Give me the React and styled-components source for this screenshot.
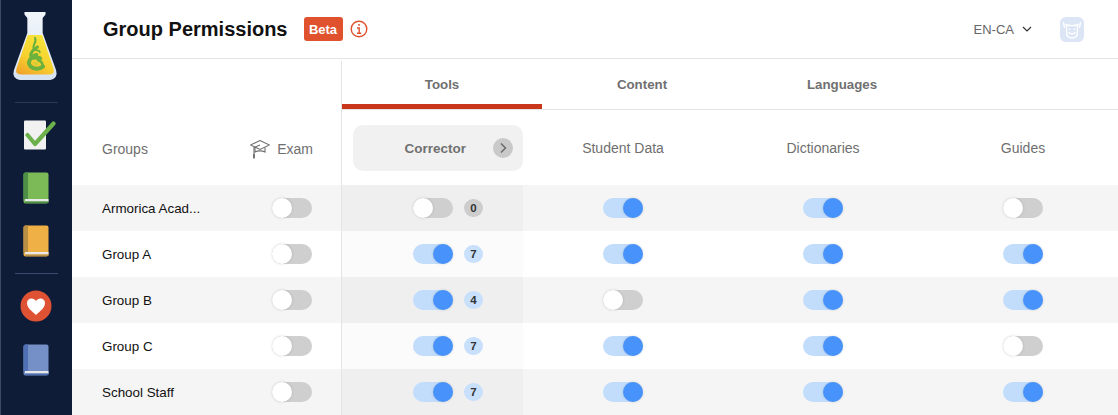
import React from "react";
import styled, { createGlobalStyle } from "styled-components";

const Global = createGlobalStyle`
  html, body { margin: 0; padding: 0; background: #fff; height: 415px; overflow: hidden; }
  body { font-family: "Liberation Sans", Arial, sans-serif; }
`;
const Page = styled.div`display: flex; width: 1118px; height: 415px; overflow: hidden;`;
const Sidebar = styled.nav`
  width: 70px; flex: none; background: #0e1c38; border-left: 1px solid #3c4a66; padding-right: 1px;
  display: flex; flex-direction: column; align-items: center; padding-top: 12px;
`;
const Logo = styled.svg`width: 44px; height: 68px; display: block; margin-right: 2px; overflow: visible;`;
const Divider = styled.div`width: 43px; height: 1px; background: ${p => p.$c}; margin: ${p => p.$m}; flex: none;`;
const NavIcon = styled.svg`display: block; flex: none; margin: ${p => p.$m || 0};`;
const Main = styled.main`flex: 1; min-width: 0; display: flex; flex-direction: column;`;
const Header = styled.header`
  height: 58px; border-bottom: 1px solid #e4e4e4; display: flex; align-items: center;
  padding: 0 34px 0 31px; flex: none;
`;
const Title = styled.h1`margin: 0; font-size: 20px; line-height: 24px; font-weight: 700; color: #111;`;
const Beta = styled.span`
  margin-left: 16px; width: 39px; height: 24px; background: #e0512d; border-radius: 3px; color: #fff;
  font-size: 13px; font-weight: 700; display: flex; align-items: center; justify-content: center;
`;
const Info = styled.svg`margin-left: 7px; display: block;`;
const Spacer = styled.div`flex: 1;`;
const Lang = styled.span`font-size: 13px; color: #666;`;
const Caret = styled.svg`margin-left: 8px; display: block;`;
const Avatar = styled.svg`margin-left: 28px; display: block;`;
const HeadArea = styled.div`display: flex; height: 126px; flex: none;`;
const LeftHead = styled.div`
  width: 270px; flex: none; box-sizing: border-box; border-right: 1px solid #e4e4e4; margin-top: 2px;
  display: flex; align-items: flex-end; justify-content: space-between; padding: 0 28px 26px 30px;
`;
const Muted = styled.span`font-size: 14px; line-height: 20px; height: 20px; color: #6f6f6f; display: flex; align-items: center;`;
const ExamIcon = styled.svg`display: block; margin-right: 7px;`;
const RightHead = styled.div`flex: 1; min-width: 0; display: flex; flex-direction: column;`;
const Tabs = styled.div`display: flex; height: 50px; border-bottom: 1px solid #e4e4e4; flex: none;`;
const Tab = styled.div`
  width: 200px; height: 50px; display: flex; align-items: center; justify-content: center;
  font-size: 13.3px; font-weight: 700; color: #707070;
  box-shadow: ${p => (p.$active ? "inset 0 -5px 0 #c8361c" : "none")};
`;
const ColHeads = styled.div`display: grid; grid-template-columns: 181px 200px 200px 200px; flex: 1;`;
const ColHead = styled.div`display: flex; align-items: center; justify-content: center; font-size: 14px; color: #6f6f6f;`;
const CorrectorHead = styled.div`
  margin: 15px 0 14px 11px; width: 170px; height: 46px; background: #f1f1f1; border-radius: 10px;
  display: flex; align-items: center; justify-content: flex-end; font-size: 13.5px; font-weight: 700; color: #707070;
`;
const CorrectorLabel = styled.span`margin-right: 27px;`;
const Chevron = styled.span`
  width: 20px; height: 20px; border-radius: 50%; background: #c9c9c9; margin-right: 10px; display: flex; align-items: center; justify-content: center;
`;
const Row = styled.div`
  display: grid; grid-template-columns: 270px 181px 200px 200px 200px; height: 46px; flex: none;
  background: ${p => (p.$odd ? "#f5f5f5" : "#fff")};
`;
const NameCell = styled.div`display: grid; grid-template-columns: 1fr 40px; align-items: center; padding: 0 29px 0 30px; border-right: 1px solid #e4e4e4; font-size: 13.4px; color: #111;`;
const CorrectorCell = styled.div`
  display: flex; align-items: center; padding-left: 71px; background: ${p => (p.$odd ? "#efefef" : "#fbfbfb")};
`;
const Cell = styled.div`display: flex; align-items: center; justify-content: center;`;
const Track = styled.span`
  display: block; width: 40px; height: 20px; border-radius: 10px; position: relative; flex: none;
  background: ${p => (p.$on ? "#c2ddfb" : "#cfcfcf")};
`;
const Knob = styled.span`
  position: absolute; top: 0; width: 20px; height: 20px; border-radius: 50%;
  left: ${p => (p.$on ? "20px" : "0")};
  background: ${p => (p.$on ? "#4893fb" : "#fff")};
  box-shadow: 0 0 3px rgba(0,0,0,.15);
`;
const Count = styled.span`
  margin-left: 11px; width: 19px; height: 18px; border-radius: 9px; font-size: 11.5px; font-weight: 700; color: #333;
  display: flex; align-items: center; justify-content: center; background: ${p => (p.$on ? "#c8e0fb" : "#cdcdcd")};
`;

const Toggle = ({ on }) => <Track $on={on}><Knob $on={on} /></Track>;

const Book = ({ body, spine, m }) => (
  <NavIcon $m={m} width="26" height="32" viewBox="0 0 26 32">
    <rect x="0.5" y="0.5" width="25" height="31" rx="2" fill={body} />
    <path d="M2.500.5H5V27.500H.5V2.500A2 2 0 0 1 2.500.5Z" fill={spine} />
    <rect x="2" y="27" width="23.500" height="2.500" fill="#e9e9e9" />
    <rect x="2" y="29.500" width="23.500" height="1.500" fill={spine} />
  </NavIcon>
);

const rows = [
  ["Armorica Acad...", 0, false, true, true, false],
  ["Group A", 7, true, true, true, true],
  ["Group B", 4, true, false, true, true],
  ["Group C", 7, true, true, true, false],
  ["School Staff", 7, true, true, true, true],
];

export default function App() {
  return (
    <Page>
      <Global />
      <Sidebar>
        <Logo viewBox="0 0 46 68" preserveAspectRatio="none">
          <defs>
            <linearGradient id="liq" x1="0.7" y1="0" x2="0.2" y2="1">
              <stop offset="0" stopColor="#f8e53c" />
              <stop offset="0.6" stopColor="#f7d02e" />
              <stop offset="1" stopColor="#f0a52a" />
            </linearGradient>
            <linearGradient id="glass" x1="0" y1="0" x2="0" y2="1">
              <stop offset="0" stopColor="#f2f6fb" />
              <stop offset="1" stopColor="#d7e2f0" />
            </linearGradient>
            <filter id="soft" x="-20%" y="-20%" width="140%" height="140%">
              <feGaussianBlur stdDeviation="0.4" />
            </filter>
          </defs>
          <path d="M12 0H34V2.500L31 6V21L45 58Q47.500 66 39 68H7Q-1.500 66 1 58L15 21V6L12 2.500Z" fill="url(#glass)" />
          <path d="M15.500 23H30.500L42.500 57Q44 62 38 62.500H8Q2 62 3.500 57Z" fill="url(#liq)" />
          <g fill="none" stroke="#6ab23e" strokeLinecap="round" filter="url(#soft)">
            <path d="M23 26C25.500 30 20 33 21.500 36.500C23 39.500 27 37 28 40" strokeWidth="2.200" />
            <path d="M25.500 35C20.500 38 16.500 42.500 20 45.500C23 48 28 43.500 29 46.500" strokeWidth="3.200" />
            <path d="M24.500 43C18.500 45 14.500 50 18 54C21 57.500 28 57.500 31.500 54.500" strokeWidth="4" />
            <path d="M26 48C29.500 49 32 52 30.500 55" strokeWidth="2.800" />
          </g>
          <path d="M21.500 50.500C23.500 49 26.500 50 26 52C25.500 54 22.500 54 21.500 50.500Z" fill="#cfcf3a" />
        </Logo>
        <Divider $c="#2c3850" $m="22px 0 17px" />
        <NavIcon $m="0 0 0 8px" width="32" height="30" viewBox="0 0 32 30">
          <rect x="0" y="0.500" width="22" height="29" rx="1" fill="#f1f1f1" />
          <path d="M3.500 15L11 24L29.500 3.500" fill="none" stroke="#6cb14c" strokeWidth="4.200" strokeLinecap="round" strokeLinejoin="round" />
        </NavIcon>
        <Book body="#7bba57" spine="#4d8f46" m="22px 0 0" />
        <Book body="#efb046" spine="#b98f45" m="21px 0 0" />
        <Divider $c="#3b4a6b" $m="16px 0 16px" />
        <NavIcon width="32" height="32" viewBox="0 0 32 32">
          <circle cx="16" cy="16" r="15.500" fill="#de5233" />
          <path d="M16 25C12 21 7 18 7 13C7 10 9 8.500 11.500 8.500C13.500 8.500 15 9.500 16 11C17 9.500 18.500 8.500 20.500 8.500C23 8.500 25 10 25 13C25 18 20 21 16 25Z" fill="#fff" />
        </NavIcon>
        <Book body="#7590c6" spine="#4f70b4" m="22px 0 0" />
      </Sidebar>
      <Main>
        <Header>
          <Title>Group Permissions</Title>
          <Beta>Beta</Beta>
          <Info width="18" height="18" viewBox="0 0 18 18" fill="none" stroke="#e0512d">
            <circle cx="9" cy="9" r="7.800" strokeWidth="1.400" />
            <path d="M7 8H9.200V13M7 13.200H11.200" strokeWidth="1.400" />
            <path d="M8.200 4.800H9.800" strokeWidth="1.800" />
          </Info>
          <Spacer />
          <Lang>EN-CA</Lang>
          <Caret width="10" height="6" viewBox="0 0 10 6" fill="none" stroke="#333" strokeWidth="1.200"><path d="M1 1L5 5L9 1" /></Caret>
          <Avatar width="24" height="25" viewBox="0 0 24 25">
            <rect width="24" height="25" rx="6" fill="#dbe5f6" />
            <g fill="none" stroke="#fff" strokeWidth="1.400" strokeLinecap="round">
              <path d="M3.500 5.500C4 8 4 9 4.500 10M20.500 5.500C20 8 20 9 19.500 10" />
              <path d="M5.500 7.500C9 9 15 9 18.500 7.500" />
              <path d="M6.500 8V15C6.500 19 9 21 12 21C15 21 17.500 19 17.500 15V8" />
              <path d="M9 15.500C10.500 17.500 13.500 17.500 15 15.500" />
              <path d="M9.500 12V12.500M14.500 12V12.500" />
            </g>
          </Avatar>
        </Header>
        <HeadArea>
          <LeftHead>
            <Muted>Groups</Muted>
            <Muted>
              <ExamIcon width="20" height="22" viewBox="0 0 20 22" fill="none" stroke="#6f6f6f" strokeWidth="1.100">
                <path d="M10 2.500L19.500 7L10 11.500L0.500 7Z" />
                <path d="M5 9.500V14C7.500 12.500 12.500 12.500 15 14V9.500" />
                <path d="M10 7L4 9.500V19" />
                <path d="M4 16V20.500" strokeWidth="1.800" />
              </ExamIcon>
              Exam
            </Muted>
          </LeftHead>
          <RightHead>
            <Tabs>
              <Tab $active>Tools</Tab>
              <Tab>Content</Tab>
              <Tab>Languages</Tab>
            </Tabs>
            <ColHeads>
              <CorrectorHead>
                <CorrectorLabel>Corrector</CorrectorLabel>
                <Chevron>
                  <svg width="8" height="12" viewBox="0 0 8 12" fill="none" stroke="#666" strokeWidth="1.400"><path d="M2 1.500L6.500 6L2 10.500" /></svg>
                </Chevron>
              </CorrectorHead>
              <ColHead>Student Data</ColHead>
              <ColHead>Dictionaries</ColHead>
              <ColHead>Guides</ColHead>
            </ColHeads>
          </RightHead>
        </HeadArea>
        {rows.map(([name, n, c, a, b, d], i) => {
          const odd = i % 2 === 0;
          return (
            <Row key={name} $odd={odd}>
              <NameCell>
                <span>{name}</span>
                <Toggle on={false} />
              </NameCell>
              <CorrectorCell $odd={odd}>
                <Toggle on={c} />
                <Count $on={c}>{n}</Count>
              </CorrectorCell>
              <Cell><Toggle on={a} /></Cell>
              <Cell><Toggle on={b} /></Cell>
              <Cell><Toggle on={d} /></Cell>
            </Row>
          );
        })}
      </Main>
    </Page>
  );
}
